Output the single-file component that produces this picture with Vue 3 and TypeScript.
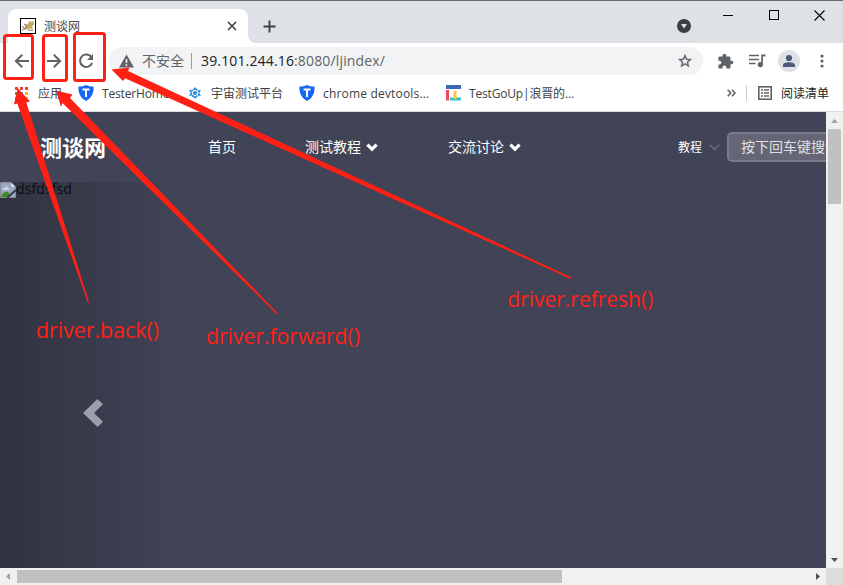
<script setup lang="ts">
interface Mark { x: number; y: number; w: number; h: number }
interface Pointer { points: string; label: string; x: number; y: number; length: number }

const marks: Mark[] = [
  { x: 4.5, y: 35.5, w: 28, h: 43 },
  { x: 43.5, y: 35.5, w: 23, h: 45 },
  { x: 74.5, y: 33.5, w: 30, h: 47 },
]

const pointers: Pointer[] = [
  { points: '17.7,88 30,101.5 26.3,102.5 89,302 88,303 17.3,103.500 14,104.500', label: 'driver.back()', x: 36, y: 338, length: 123 },
  { points: '56,90.5 72.5,94.5 70,98 277.5,313 276.5,314 62.500,103 61,107', label: 'driver.forward()', x: 206, y: 344, length: 154 },
  { points: '111.5,69.5 129.5,67.5 128,71 571.5,277.5 571,279 125,78.3 123,81', label: 'driver.refresh()', x: 507.3, y: 307, length: 146 },
]

const appColors: string[] = ['#ea4335', '#ea4335', '#ea4335', '#34a853', '#4285f4', '#fbbc05', '#34a853', '#fbbc05', '#fbbc05']
</script>

<template>
  <div class="window">
    <div class="tabstrip">
      <div class="tab">
        <svg class="favicon" width="16" height="16" viewBox="0 0 16 16">
          <rect x=".5" y=".5" width="15" height="15" fill="#fff" stroke="#000" />
          <path d="M2 12 L5.500 9.500 L4.500 7.500 L7 6.500 L9 4.500 L9.500 2.500 L11 4 L13.500 3 L14 6.500 L12 8.500 L13 11.500 L10 10.500 L7 11.500 Z" fill="#c9a56b" />
          <path d="M2 12.500 L6 9 M4 6 L7 7.500 M8 12 L13 12.500 M2 8 L4 10" stroke="#6d624c" fill="none" stroke-width=".9" />
        </svg>
        <span class="tab-title">测谈网</span>
        <svg class="tab-close" width="10" height="10" viewBox="0 0 10 10"><path d="M1 1 L9 9 M9 1 L1 9" stroke="#3c4043" stroke-width="1.6" /></svg>
      </div>
      <svg class="tab-foot" width="8" height="8" viewBox="0 0 8 8"><path d="M0 0 A8 8 0 0 0 8 8 H0 Z" fill="#fff" /></svg>
      <svg class="new-tab" width="13" height="13" viewBox="0 0 13 13"><path d="M6.5 .5 V12.5 M.5 6.5 H12.5" stroke="#3c4043" stroke-width="1.9" /></svg>
      <div class="window-controls">
        <svg class="tab-search" width="14" height="14" viewBox="0 0 14 14"><circle cx="7" cy="7" r="7" fill="#3c4043" /><path d="M4 5 H10 L7 9.6 Z" fill="#dee1e6" /></svg>
        <svg class="minimize" width="10" height="11" viewBox="0 0 10 11"><path d="M0 5.5 H10" stroke="#000" /></svg>
        <svg class="maximize" width="10" height="10" viewBox="0 0 10 10"><rect x=".5" y=".5" width="9" height="9" fill="none" stroke="#000" /></svg>
        <svg width="11" height="11" viewBox="0 0 11 11"><path d="M.5 .5 L10.5 10.5 M10.5 .5 L.5 10.5" stroke="#000" stroke-width="1.1" /></svg>
      </div>
    </div>

    <div class="toolbar">
      <svg class="nav" width="16" height="16" viewBox="0 0 16 16"><path d="M15 8 H2 M8.2 1.7 L1.9 8 L8.2 14.3" fill="none" stroke="#5f6368" stroke-width="2" /></svg>
      <svg class="nav" width="16" height="16" viewBox="0 0 16 16"><path d="M1 8 H14 M7.8 1.7 L14.1 8 L7.8 14.3" fill="none" stroke="#5f6368" stroke-width="2" /></svg>
      <svg class="nav" width="16" height="16" viewBox="0 0 16 16"><path d="M13.6 4.6 A6.2 6.2 0 1 0 14.1 9.8" fill="none" stroke="#5f6368" stroke-width="2" /><path d="M15 1 V7 H9 Z" fill="#5f6368" /></svg>
      <div class="omnibox">
        <svg width="15" height="14" viewBox="0 0 15 14"><path d="M7.5 .5 L15 13.5 H0 Z" fill="#5f6368" /><path d="M7.5 5 V9 M7.5 10.3 V12" stroke="#f1f3f4" stroke-width="1.6" /></svg>
        <span class="insecure">不安全</span>
        <span class="address"><b>39.101.244.16</b>:8080/ljindex/</span>
        <svg class="star" width="16" height="16" viewBox="0 0 24 24"><path d="M22 9.24l-7.19-.62L12 2 9.19 8.63 2 9.24l5.46 4.73L5.82 21 12 17.27 18.18 21l-1.63-7.03L22 9.24zM12 15.4l-3.76 2.27 1-4.28-3.32-2.88 4.38-.38L12 6.1l1.71 4.04 4.38.38-3.32 2.88 1 4.28L12 15.4z" fill="#5f6368" stroke="#5f6368" stroke-width=".6" /></svg>
      </div>
      <div class="actions">
        <svg width="17" height="17" viewBox="0 0 24 24"><path d="M20.5 11H19V7c0-1.1-.9-2-2-2h-4V3.500C13 2.120 11.880 1 10.500 1S8 2.120 8 3.500V5H4c-1.100 0-2 .9-2 2v3.800h1.500c1.500 0 2.700 1.200 2.700 2.700S5 16.200 3.500 16.200H2V20c0 1.100.9 2 2 2h3.800v-1.500c0-1.500 1.200-2.700 2.700-2.700s2.700 1.200 2.700 2.700V22H17c1.100 0 2-.9 2-2v-4h1.500c1.380 0 2.500-1.120 2.500-2.500S21.880 11 20.500 11z" fill="#5f6368" /></svg>
        <svg class="media" width="17" height="14" viewBox="0 0 17 14"><path d="M0 1.500 H10 M0 5.500 H10 M0 9.500 H6.500" stroke="#5f6368" stroke-width="1.700" /><path d="M12.200 .6 H16.500 V2.400 H13.900 V10.600 A2.600 2.600 0 1 1 12.200 8.200 Z" fill="#5f6368" /></svg>
        <svg class="avatar" width="22" height="22" viewBox="0 0 22 22"><circle cx="11" cy="11" r="11" fill="#dee1e6" /><circle cx="11" cy="8" r="3.100" fill="#4d5b78" /><path d="M5 17 V15.200 C5 13 8.500 12.200 11 12.200 S17 13 17 15.200 V17 Z" fill="#4d5b78" /></svg>
        <svg width="4" height="14" viewBox="0 0 4 14"><g fill="#5f6368"><circle cx="2" cy="2" r="1.600" /><circle cx="2" cy="7" r="1.600" /><circle cx="2" cy="12" r="1.600" /></g></svg>
      </div>
    </div>

    <div class="bookmarks">
      <div class="apps"><i v-for="(color, i) in appColors" :key="i" :style="{ background: color }"></i></div>
      <span class="bm apps-label">应用</span>
      <svg class="shield" width="16" height="16" viewBox="0 0 16 16"><path d="M8 0 C10.500 1.200 13 1.500 15.500 1.500 C16 8 13.500 13 8 16 C2.500 13 0 8 .5 1.500 C3 1.500 5.500 1.200 8 0 Z" fill="#1767f5" /><path d="M4.500 4.500 H11.500 M8 4 V12" stroke="#fff" stroke-width="2" /></svg>
      <span class="bm tester">TesterHome</span>
      <svg class="atom" width="12" height="12" viewBox="0 0 14 14"><g fill="none" stroke="#2384d3" stroke-width="1.900"><path d="M7 2 L11.300 4.500 V9.500 L7 12 L2.700 9.500 V4.500 Z" stroke-dasharray="3 1" /><circle cx="7" cy="7" r="1.500" /></g><path d="M7 0 L9 3 H5 Z M7 14 L5 11 H9 Z M0 3.500 L4 4 L2 7 Z M14 3.500 L10 4 L12 7 Z M0 10.500 L4 10 L2 7 Z M14 10.500 L10 10 L12 7 Z" fill="#3797e4" /></svg>
      <span class="bm universe">宇宙测试平台</span>
      <svg class="shield" width="16" height="16" viewBox="0 0 16 16"><path d="M8 0 C10.500 1.200 13 1.500 15.500 1.500 C16 8 13.500 13 8 16 C2.500 13 0 8 .5 1.500 C3 1.500 5.500 1.200 8 0 Z" fill="#1767f5" /><path d="M4.500 4.500 H11.500 M8 4 V12" stroke="#fff" stroke-width="2" /></svg>
      <span class="bm devtools">chrome devtools...</span>
      <svg class="goup" width="15" height="16" viewBox="0 0 15 16"><path d="M0 0 H15 V4 H0 Z" fill="#3d68b2" /><path d="M0 5 H3 V15.500 H0 Z" fill="#f04b63" /><path d="M4 12.500 H15 V15.500 H4 Z" fill="#2fc4c0" /><path d="M7.500 6 H10.500 V14 H7.500 Z" fill="#fcc63e" /></svg>
      <span class="bm goup-label">TestGoUp|浪晋的...</span>
      <div class="bookmarks-end">
        <svg width="9" height="8" viewBox="0 0 9 8"><path d="M.7 .8 L3.700 4 L.7 7.200 M5 .8 L8 4 L5 7.200" fill="none" stroke="#5f6368" stroke-width="1.600" /></svg>
        <span class="divider"></span>
        <svg width="14" height="14" viewBox="0 0 14 14"><rect x=".8" y=".8" width="12.400" height="12.400" fill="none" stroke="#5f6368" stroke-width="1.600" /><path d="M3 4 H5 M6 4 H11 M3 7 H5 M6 7 H11 M3 10 H5 M6 10 H11" stroke="#5f6368" stroke-width="1.600" /></svg>
        <span class="bm reading">阅读清单</span>
      </div>
    </div>

    <div class="viewport">
      <div class="page">
        <header class="site-header">
          <h1>测谈网</h1>
          <span class="link home">首页</span>
          <span class="link course">测试教程 <svg width="12" height="9" viewBox="0 0 12 9"><path d="M1.400 1.600 L6 6.200 L10.600 1.600" fill="none" stroke="#fff" stroke-width="3.200" /></svg></span>
          <span class="link">交流讨论 <svg width="12" height="9" viewBox="0 0 12 9"><path d="M1.400 1.600 L6 6.200 L10.600 1.600" fill="none" stroke="#fff" stroke-width="3.200" /></svg></span>
          <div class="search">
            <span class="category">教程</span>
            <svg width="11" height="7" viewBox="0 0 11 7"><path d="M.7 .7 L5.500 5.700 L10.300 .7" fill="none" stroke="#777987" stroke-width="1.100" /></svg>
            <div class="field">按下回车键搜索</div>
          </div>
        </header>
        <main class="carousel">
          <div class="previous">
            <div class="missing">
              <svg width="16" height="16" viewBox="0 0 16 16"><path d="M.5 .5 H11 L15.500 5 V15.500 H.5 Z" fill="#98a8c3" stroke="#888c94" /><path d="M11 .5 V5 H15.500 Z" fill="#d5d7da" /><path d="M2 8 C2 6 4 6 4 6 C5 4 8 4 8 6 C10 6 10 8 9 8 Z" fill="#ccd2db" /><path d="M1 15 C2 11 5 9 8 10 L10 12 L7 15 Z" fill="#3f8c2d" /><path d="M7 16 L16 8" stroke="#363844" stroke-width="2" /></svg><span>dsfdsfsd</span>
            </div>
            <svg class="chevron" width="20" height="28" viewBox="0 0 20 28"><path d="M14.500 0 L20 5.200 L11 14 L20 22.700 L14.500 28 L0 14 Z" fill="#9d9ea9" /></svg>
          </div>
        </main>
      </div>
      <div class="scroll-y">
        <svg width="7" height="4" viewBox="0 0 7 4"><path d="M3.500 0 L7 4 H0 Z" fill="#a3a3a3" /></svg>
        <div class="thumb-y"></div>
        <svg class="down" width="7" height="4" viewBox="0 0 7 4"><path d="M0 0 H7 L3.500 4 Z" fill="#505050" /></svg>
      </div>
    </div>
    <div class="scroll-x">
      <svg class="left" width="4" height="7" viewBox="0 0 4 7"><path d="M4 0 V7 L0 3.500 Z" fill="#a3a3a3" /></svg>
      <div class="thumb-x"></div>
      <svg class="right" width="4" height="7" viewBox="0 0 4 7"><path d="M0 0 V7 L4 3.500 Z" fill="#505050" /></svg>
      <div class="corner"></div>
    </div>

    <svg class="annotations" width="843" height="585" viewBox="0 0 843 585">
      <rect v-for="m in marks" :key="m.x" :x="m.x" :y="m.y" :width="m.w" :height="m.h" rx="2" class="mark" />
      <g v-for="p in pointers" :key="p.label" class="pointer">
        <polygon :points="p.points" />
        <text :x="p.x" :y="p.y" :textLength="p.length" lengthAdjust="spacingAndGlyphs">{{ p.label }}</text>
      </g>
    </svg>
  </div>
</template>

<style>
body { overflow: hidden; }
</style>

<style scoped>
* { box-sizing: border-box; }
svg { display: block; flex: none; }
span { white-space: nowrap; }
.window { position: relative; display: flex; flex-direction: column; width: 843px; height: 585px; overflow: hidden; background: #fff; font-family: "Open Sans", "Noto Sans CJK SC", sans-serif; }
.tabstrip { display: flex; height: 43px; flex: none; background: #dee1e6; border-top: 1px solid #66686b; padding-left: 8px; }
.tab { display: flex; align-items: center; width: 240px; height: 34px; margin-top: 8px; padding: 0 12px; background: #fff; border-radius: 8px 8px 0 0; }
.tab-title { margin-left: 8px; padding-top: 2px; font-size: 12px; line-height: 18px; color: #45494d; }
.tab-close { margin-left: auto; margin-right: -1px; }
.tab-foot { align-self: flex-end; }
.new-tab { margin: 19px 0 0 7px; }
.window-controls { display: flex; flex: 1; justify-content: flex-end; padding: 9px 18px 0 0; }
.tab-search { margin: 9px 32px 0 0; }
.minimize { margin-right: 36px; }
.maximize { margin-right: 35px; }
.toolbar { display: flex; align-items: center; height: 36px; flex: none; padding-left: 14px; }
.nav { margin-right: 16px; }
.omnibox { display: flex; align-items: center; width: 594px; height: 28px; margin-left: -1px; padding: 0 10px; border-radius: 14px; background: #f1f3f4; }
.insecure { width: 49px; margin-left: 8px; font-size: 14px; line-height: 16px; color: #5f6368; }
.address { border-left: 1px solid #9a9da0; height: 16px; padding-left: 9px; line-height: 15px; font-size: 14px; letter-spacing: .15px; color: #5f6368; }
.address b { font-weight: 400; color: #202124; }
.star { margin-left: auto; }
.actions { display: flex; align-items: center; flex: 1; padding-left: 14px; }
.media { margin-left: 15px; }
.avatar { margin: 0 20px 0 12px; }
.bookmarks { display: flex; align-items: center; height: 33px; flex: none; padding: 0 14px 4px 15px; border-bottom: 1px solid #d9dbdf; color: #3c4043; font-size: 12px; }
.apps { display: grid; grid-template-columns: repeat(3, 3px); gap: 2px; width: 13px; }
.apps i { width: 3px; height: 3px; }
.bm { padding-top: 2px; line-height: 20px; }
.apps-label { margin-left: 10px; width: 40px; }
.shield { margin-right: 8px; }
.tester { width: 79px; letter-spacing: -.15px; }
.atom { margin: 0 10px 0 8px; }
.universe { width: 88px; }
.devtools { width: 123px; letter-spacing: .18px; }
.goup { margin-right: 8px; }
.goup-label { letter-spacing: -.17px; }
.bookmarks-end { display: flex; align-items: center; margin-left: auto; }
.divider { width: 1px; height: 16px; background: #c8cbce; margin: 0 11px 0 10px; }
.reading { margin-left: 9px; color: #202124; }
.viewport { display: flex; flex: 1; min-height: 0; }
.page { width: 826px; overflow: hidden; background: #414356; }
.site-header { display: flex; align-items: center; height: 70px; padding-left: 40px; color: #fff; }
h1 { width: 168px; margin: 0; font-size: 22px; line-height: 30px; }
.link { display: flex; align-items: center; gap: 5px; font-size: 14px; line-height: 20px; }
.home { width: 97px; }
.course { width: 143px; }
.search { display: flex; align-items: center; margin-left: auto; width: 148px; flex: none; font-size: 12px; }
.category { margin-right: 7px; }
.field { flex: none; width: 180px; height: 30px; margin-left: 7px; padding-left: 12px; border: 2px solid #7a7c89; border-radius: 5px; background: #646675; color: #dfe0e4; font-size: 14px; line-height: 26px; }
.carousel { height: 386px; }
.previous { width: 175px; height: 100%; background: linear-gradient(to right, rgba(0,0,0,.25), rgba(0,0,0,0)); }
.missing { display: flex; height: 16px; font-size: 14px; line-height: 14px; letter-spacing: .1px; color: #0b0c10; }
.chevron { margin: 201px 0 0 83px; }
.scroll-y { display: flex; flex-direction: column; align-items: center; width: 17px; background: #f1f1f1; padding: 7px 0 6px; }
.thumb-y { width: 13px; height: 75px; margin-top: 6px; background: #c1c1c1; }
.down { margin-top: auto; }
.scroll-x { display: flex; align-items: center; height: 17px; flex: none; background: #f1f1f1; }
.left { margin: 0 7px 0 6px; }
.thumb-x { width: 545px; height: 13px; background: #c1c1c1; }
.right { margin-left: auto; margin-right: 6px; }
.corner { width: 17px; height: 17px; background: #dcdcdc; }
.annotations { position: absolute; inset: 0; }
.mark { fill: none; stroke: #ff2015; stroke-width: 3; }
.pointer { fill: #ff2015; font-size: 21px; }
</style>
